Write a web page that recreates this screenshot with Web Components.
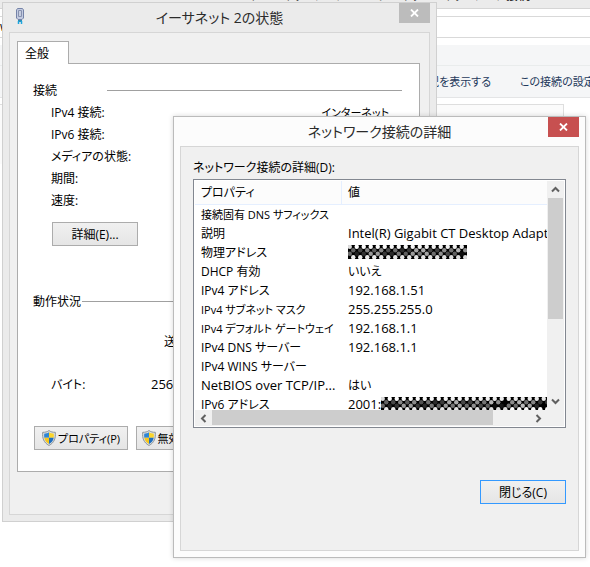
<!DOCTYPE html>
<html lang="ja">
<head>
<meta charset="utf-8">
<meta name="viewport" content="width=device-width, initial-scale=1">
<title>ネットワーク接続</title>
<style>
  body {
    margin: 0;
    min-height: 100vh;
    position: relative;
    overflow: hidden;
    background: #fff;
    color: #000;
    font: 12px/19px "Open Sans", "Noto Sans CJK JP", sans-serif;
    font-feature-settings: "palt";
  }

  /* windows on the desktop */
  #status { left: 2px; top: 2px; width: 435px; }
  #details { left: 173px; top: 116px; width: 413px; }

  .general { padding: 8px 9px 42px 7px; }
  .row { display: flex; align-items: center; height: 22px; padding: 0 13px 0 18px; }
  .row .value { margin-left: auto; font-size: 11px; }
  .more { padding: 11px 18px 45px; margin-left: 1px; }
  .sent { padding: 20px 0 0 131px; }
  .bytes { display: grid; grid-template-columns: 100px 1fr; margin: 24px 0 32px 18px; }
  .bytes dd { margin: 0; font-size: 13px; }
  .actions { display: flex; gap: 8px; margin-left: 1px; }

  .detail { padding: 11px 12px 46px; }
  .label { margin: 0 0 2px; }
  .foot { display: flex; justify-content: flex-end; margin-top: 52px; }
</style>
</head>
<body>
<explorer-backdrop></explorer-backdrop>

<win-dialog id="status" heading="イーサネット 2の状態" inactive>
  <net-plug slot="icon"></net-plug>
  <div class="general">
    <tab-panel label="全般">
      <group-line wide>接続</group-line>
      <div class="row">IPv4 接続:<span class="value">インターネット</span></div>
      <div class="row">IPv6 接続:</div>
      <div class="row">メディアの状態:</div>
      <div class="row">期間:</div>
      <div class="row">速度:</div>
      <div class="more"><win-button>詳細(E)...</win-button></div>
      <group-line>動作状況</group-line>
      <div class="sent">送信</div>
      <dl class="bytes"><dt>バイト:</dt><dd>256,</dd></dl>
      <div class="actions">
        <win-button shield>プロパティ(P)</win-button>
        <win-button shield>無効にする(D)</win-button>
      </div>
    </tab-panel>
  </div>
</win-dialog>

<win-dialog id="details" heading="ネットワーク接続の詳細">
  <div class="detail">
    <p class="label">ネットワーク接続の詳細(D):</p>
    <detail-list></detail-list>
    <div class="foot"><win-button primary>閉じる(C)</win-button></div>
  </div>
</win-dialog>

<script>
class ExplorerBackdrop extends HTMLElement {
  connectedCallback() {
    this.attachShadow({ mode: 'open' });
    this.shadowRoot.innerHTML = `
      <style>
        :host { display: block; overflow: hidden; }
        .title {
          display: flex;
          align-items: flex-end;
          height: 9px;
          padding: 0 0 0 167px;
          box-sizing: border-box;
          overflow: hidden;
          background: #ebebeb;
          border-bottom: 1px solid #d5d5d5;
          white-space: nowrap;
        }
        .title span { padding-bottom: 3px; }
        .address {
          height: 20px;
          margin: 7px 0;
          border: solid #d9d9d9;
          border-width: 1px 0;
          line-height: 20px;
        }
        .menu { height: 20px; background: #f5f6f7; border-bottom: 1px solid #e9ecec; }
        nav {
          display: grid;
          grid-template-columns: 491px max-content;
          column-gap: 29px;
          align-items: center;
          height: 31px;
          background: #f5f6f7;
          border-bottom: 1px solid #e4e5e6;
          white-space: nowrap;
          font-size: 11px;
        }
        a { color: #1e395b; text-decoration: none; }
        a:first-child { text-align: right; }
        .item {
          width: 564px;
          height: 60px;
          margin-top: 6px;
          box-sizing: border-box;
          border: solid #dedede;
          border-width: 1px 1px 0 0;
          background: #fbfbfb;
        }
      </style>
      <div class="title"><span>コントロール パネル ▸ ネットワークとインターネット ▸ ネットワーク接続</span></div>
      <div class="address">w</div>
      <div class="menu"></div>
      <nav>
        <a href="#status">この接続の状況を表示する</a>
        <a href="#settings">この接続の設定を変更する</a>
      </nav>
      <div class="item"></div>
    `;
  }
}
customElements.define('explorer-backdrop', ExplorerBackdrop);

class WinDialog extends HTMLElement {
  connectedCallback() {
    this.attachShadow({ mode: 'open' });
    this.shadowRoot.innerHTML = `
      <style>
        :host {
          display: block;
          position: absolute;
          box-sizing: border-box;
          padding: 0 6px 6px;
          border: 1px solid #bbb;
          background: #fcfcfc;
          box-shadow: 0 0 5px rgba(0, 0, 0, 0.16);
        }
        :host([inactive]) {
          border-color: #d0d0d0;
          background: #ebebeb;
          box-shadow: none;
        }
        header {
          display: grid;
          grid-template-columns: 1fr auto 1fr;
          height: 29px;
        }
        .icon { padding: 5px 0 0 7px; }
        h1 {
          margin: 0;
          font-size: 14px;
          font-weight: normal;
          line-height: 29px;
          color: #2b2b2b;
        }
        button {
          justify-self: end;
          display: grid;
          place-items: center;
          width: 31px;
          height: 20px;
          padding: 0;
          border: 0;
          background: #c75050;
        }
        :host([inactive]) button { background: #bcbcbc; }
        .client { border: 1px solid #d6d6d6; background: #f0f0f0; }
      </style>
      <header>
        <div class="icon"><slot name="icon"></slot></div>
        <h1></h1>
        <button type="button" aria-label="閉じる">
          <svg width="9" height="8" viewBox="0 0 9 8"><path d="M1 .5l7 7M8 .5l-7 7" stroke="#fff" stroke-width="1.8"/></svg>
        </button>
      </header>
      <div class="client"><slot></slot></div>
    `;
    this.shadowRoot.querySelector('h1').textContent = this.getAttribute('heading');
  }
}
customElements.define('win-dialog', WinDialog);

class NetPlug extends HTMLElement {
  connectedCallback() {
    this.attachShadow({ mode: 'open' });
    this.shadowRoot.innerHTML = `
      <style>
        :host { display: block; }
        svg { display: block; }
      </style>
      <svg width="8" height="17" viewBox="0 0 8 17">
        <path d="M1.5 .5h5l1 1.5v8l-1.5 1.500h-4L.5 10V2z" fill="#c3cbe0" stroke="#7583a8"/>
        <path d="M2.500 2.500h3v6h-3z" fill="#e9edf7" stroke="#8791af"/>
        <path d="M4 3v5" stroke="#a4aec8"/>
        <path d="M2 12h4v2H2z" fill="#2a8fb8"/>
        <path d="M2.500 13v3M5.500 13v3" stroke="#1fa6df" stroke-width="1.500"/>
      </svg>
    `;
  }
}
customElements.define('net-plug', NetPlug);

class TabPanel extends HTMLElement {
  connectedCallback() {
    this.attachShadow({ mode: 'open' });
    this.shadowRoot.innerHTML = `
      <style>
        :host { display: block; }
        button {
          display: block;
          position: relative;
          height: 23px;
          margin-bottom: -1px;
          padding: 0 19px 0 7px;
          border: 1px solid #acacac;
          border-bottom: 0;
          background: #fff;
          color: inherit;
          font: inherit;
          font-feature-settings: inherit;
        }
        .panel {
          padding: 16px 17px 21px 15px;
          border: 1px solid #acacac;
          background: #fff;
        }
      </style>
      <button type="button" role="tab" aria-selected="true"></button>
      <div class="panel" role="tabpanel"><slot></slot></div>
    `;
    this.shadowRoot.querySelector('button').textContent = this.getAttribute('label');
  }
}
customElements.define('tab-panel', TabPanel);

class GroupLine extends HTMLElement {
  connectedCallback() {
    this.attachShadow({ mode: 'open' });
    this.shadowRoot.innerHTML = `
      <style>
        :host { display: flex; align-items: center; height: 21px; }
        :host([wide]) span { min-width: 73px; }
        hr { flex: 1; margin: 0 0 0 1px; border: 0; border-top: 1px solid #a0a0a0; }
      </style>
      <span><slot></slot></span><hr>
    `;
  }
}
customElements.define('group-line', GroupLine);

class WinButton extends HTMLElement {
  connectedCallback() {
    this.attachShadow({ mode: 'open' });
    const shield = `
      <svg width="14" height="16" viewBox="0 0 14 16">
        <path d="M7 .5C5.500 1.800 3 2.400 .7 2.300c-.5 5.700.8 10.200 6.300 13.200 5.500-3 6.800-7.500 6.300-13.200C11 2.400 8.500 1.800 7 .5z" fill="#d9dcde" stroke="#8d9599"/>
        <path d="M7 2.200C5.600 3.200 4 3.600 2.200 3.700c-.1 1.500-.1 2.800.1 4H7z" fill="#2f86d6"/>
        <path d="M7 2.200c1.400 1 3 1.400 4.800 1.500.1 1.500.1 2.800-.1 4H7z" fill="#fbd52b"/>
        <path d="M2.300 7.700C2.800 10.500 4.300 12.500 7 14V7.700z" fill="#f7c61c"/>
        <path d="M11.700 7.700C11.200 10.500 9.700 12.500 7 14V7.700z" fill="#1f6fc0"/>
      </svg>`;
    this.shadowRoot.innerHTML = `
      <style>
        :host { display: block; }
        button {
          display: flex;
          align-items: center;
          justify-content: center;
          gap: 1px;
          box-sizing: border-box;
          min-width: 86px;
          height: 24px;
          padding: 0 7px;
          border: 1px solid #acacac;
          background: linear-gradient(#f0f0f0, #e5e5e5);
          color: inherit;
          font: inherit;
          font-feature-settings: inherit;
          white-space: nowrap;
        }
        :host([primary]) button { border-color: #39f; }
        :host([shield]) button { gap: 2px; min-width: 94px; padding: 0 4px; font-size: 11px; }
      </style>
      <button type="button">${this.hasAttribute('shield') ? shield : ''}<slot></slot></button>
    `;
  }
}
customElements.define('win-button', WinButton);

// Checkered blur that hides a private value
class MaskedValue extends HTMLElement {
  connectedCallback() {
    this.attachShadow({ mode: 'open' });
    const cols = Number(this.getAttribute('cols'));
    const cell = 3.5;
    let cells = '';
    for (let x = 0; x < cols; x++) {
      for (let y = 0; y < 4; y++) {
        if ((x + y) % 2) continue;
        const inner = y === 1 || y === 2;
        const tone = inner ? (x * 37 + y * 53 + x * x * 11) % 190 : 220 + (x * 17) % 35;
        cells += `<circle cx="${(x + 0.5) * cell}" cy="${(y + 0.5) * cell}" r="2.2" fill="rgb(${tone},${tone},${tone})"/>`;
      }
    }
    const width = Math.round(cols * cell);
    this.shadowRoot.innerHTML = `
      <style>
        :host { display: inline-block; vertical-align: top; }
        svg { display: block; margin-top: 2px; }
      </style>
      <svg width="${width}" height="14" viewBox="0 0 ${width} 14">
        <filter id="soft"><feGaussianBlur stdDeviation="0.6"/></filter>
        <rect width="${width}" height="14" fill="#000"/>
        <g filter="url(#soft)">${cells}</g>
      </svg>
    `;
  }
}
customElements.define('masked-value', MaskedValue);

class DetailList extends HTMLElement {
  connectedCallback() {
    this.attachShadow({ mode: 'open' });
    this.shadowRoot.innerHTML = `
      <style>
        :host {
          display: grid;
          grid-template-columns: 1fr 17px;
          grid-template-rows: 229px 16px;
          padding: 1px;
          border: 1px solid #828790;
          background: #fff;
        }
        .view { overflow: hidden; min-width: 0; }
        table { width: 100%; table-layout: fixed; border-collapse: separate; border-spacing: 0; }
        th, td {
          height: 19px;
          padding: 0 0 0 6px;
          font-weight: normal;
          text-align: left;
          white-space: nowrap;
        }
        thead th {
          height: 23px;
          background: #fcfcfc;
          border-bottom: 1px solid #e5efff;
        }
        thead th:first-child { width: 140px; border-right: 1px solid #e5efff; }
        .dense { font-size: 11px; }
        .latin { font-size: 13px; }
        .bar { display: flex; background: #f0f0f0; }
        .bar.v { flex-direction: column; }
        .bar button {
          display: grid;
          place-items: center;
          flex: none;
          width: 17px;
          height: 17px;
          padding: 0;
          border: 0;
          background: none;
        }
        .bar.h button { height: 16px; }
        .thumb { background: #cdcdcd; }
        .v .thumb { height: 121px; margin: 0 1px; }
        .h .thumb { width: 281px; margin-bottom: 1px; }
        .v button:last-child { margin-top: auto; }
        .h button:last-child { margin-left: auto; }
        .corner { background: #f0f0f0; }
        path { fill: none; stroke: #606060; stroke-width: 2; }
      </style>
      <div class="view">
        <table>
          <thead><tr><th>プロパティ</th><th>値</th></tr></thead>
          <tbody>
            <tr><td class="dense">接続固有 DNS サフィックス</td><td></td></tr>
            <tr><td>説明</td><td class="latin">Intel(R) Gigabit CT Desktop Adapt</td></tr>
            <tr><td>物理アドレス</td><td><masked-value cols="34"></masked-value></td></tr>
            <tr><td>DHCP 有効</td><td>いいえ</td></tr>
            <tr><td>IPv4 アドレス</td><td class="latin">192.168.1.51</td></tr>
            <tr><td class="dense">IPv4 サブネット マスク</td><td class="latin">255.255.255.0</td></tr>
            <tr><td class="dense">IPv4 デフォルト ゲートウェイ</td><td class="latin">192.168.1.1</td></tr>
            <tr><td>IPv4 DNS サーバー</td><td class="latin">192.168.1.1</td></tr>
            <tr><td>IPv4 WINS サーバー</td><td></td></tr>
            <tr><td class="latin">NetBIOS over TCP/IP...</td><td>はい</td></tr>
            <tr><td>IPv6 アドレス</td><td class="latin">2001:<masked-value cols="48"></masked-value></td></tr>
          </tbody>
        </table>
      </div>
      <div class="bar v">
        <button type="button" aria-label="上へ"><svg width="9" height="7" viewBox="0 0 9 7"><path d="M1 5.500l3.500-3.500L8 5.500"/></svg></button>
        <div class="thumb"></div>
        <button type="button" aria-label="下へ"><svg width="9" height="7" viewBox="0 0 9 7"><path d="M1 1.500l3.500 3.500L8 1.500"/></svg></button>
      </div>
      <div class="bar h">
        <button type="button" aria-label="左へ"><svg width="7" height="9" viewBox="0 0 7 9"><path d="M5.500 1l-3.500 3.500L5.500 8"/></svg></button>
        <div class="thumb"></div>
        <button type="button" aria-label="右へ"><svg width="7" height="9" viewBox="0 0 7 9"><path d="M1.500 1l3.500 3.500L1.500 8"/></svg></button>
      </div>
      <div class="corner"></div>
    `;
  }
}
customElements.define('detail-list', DetailList);
</script>
</body>
</html>
